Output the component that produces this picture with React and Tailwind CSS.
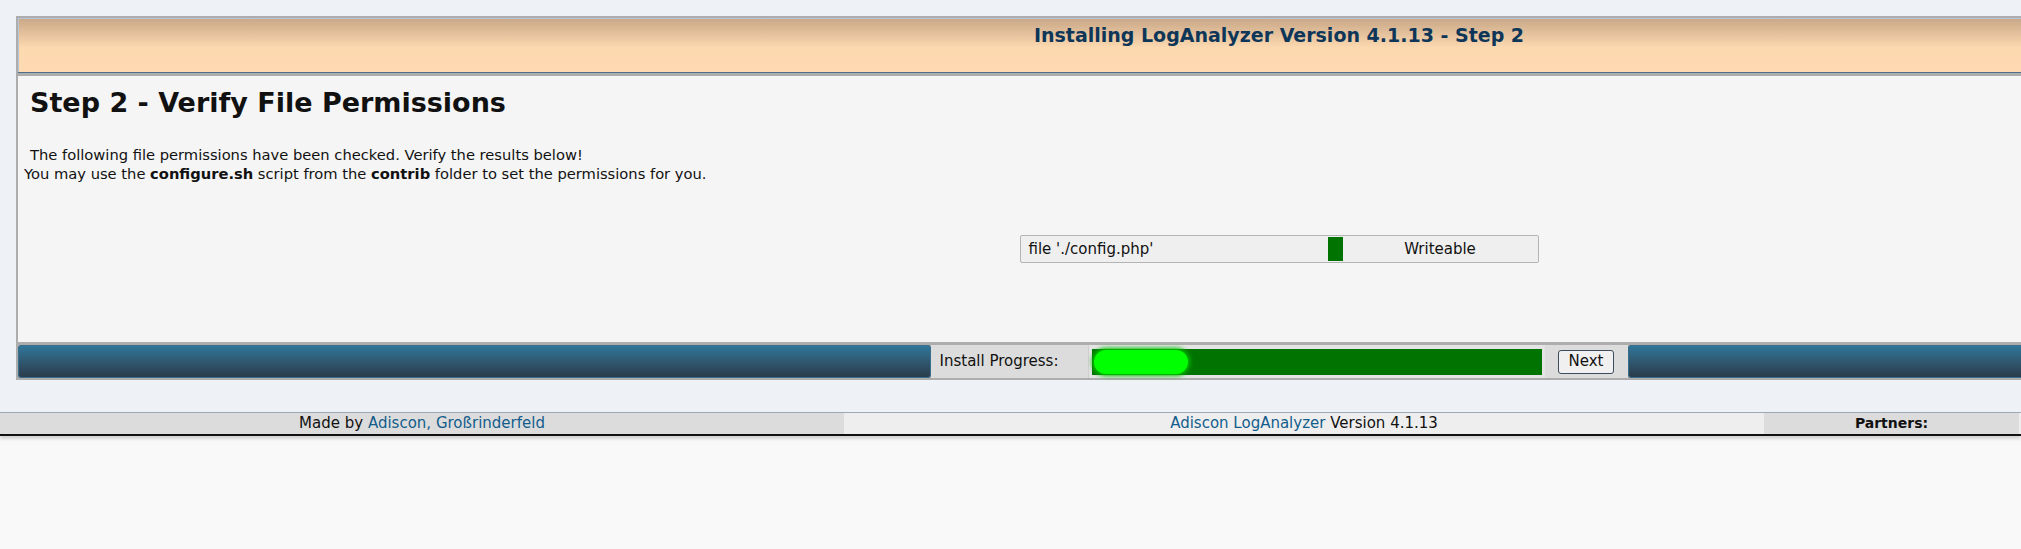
import React from 'react';

const font = "font-['DejaVu_Sans','Verdana','Liberation_Sans',sans-serif]";

function FileRow({ name, status }) {
  return (
    <div className="flex justify-center">
      <div className="flex h-[28px] w-[519px] items-stretch rounded-[2px] border border-[#b4b4b4] bg-[#efefef] text-[15px] text-[#111]">
        <div className="flex w-[307px] items-center pl-[8px]">{name}</div>
        <div className="my-[1px] w-[15px] bg-[#007300]" />
        <div className="flex flex-1 items-center justify-center">{status}</div>
      </div>
    </div>
  );
}

function ProgressBar({ percent }) {
  return (
    <div className="relative h-[26px] w-[450px] bg-[#007300]">
      <div
        className="absolute left-[2px] top-[1px] h-[24px] rounded-full bg-[#00ff00] shadow-[0_0_4px_2px_#00c000]"
        style={{ width: `${percent}%` }}
      />
    </div>
  );
}

export default function App() {
  return (
    <div className={`min-h-screen w-full overflow-hidden bg-[#f9f9f9] ${font}`}>
      <div className="bg-[#eef1f5] pb-[32px] pt-[16px]">
        <div className="ml-[16px] flex w-[2526px] flex-col gap-[4px] bg-[#adadad] p-[2px]">
          {/* header */}
          <div className="h-[55px] border-b border-[#4f6d8c] bg-gradient-to-b from-[#c8a787] via-[#fdd9b0] via-55% to-[#fed9b1] pt-[6px] text-center text-[19px] font-bold leading-[23px] text-[#0d3659] shadow-[inset_1px_1px_0_#b7c6d6]">
            Installing LogAnalyzer Version 4.1.13 - Step 2
          </div>

          <div className="-mt-[1px] flex flex-col gap-[3px]">
            {/* content */}
            <div className="h-[266px] bg-[#f5f5f5] pt-[9px] text-[#111]">
              <h1 className="pl-[12px] text-[27px] font-bold leading-[36px] text-[#111]">
                Step 2 - Verify File Permissions
              </h1>
              <div className="mt-[24px] text-[14.7px] leading-[19px]">
                <div className="pl-[12px]">The following file permissions have been checked. Verify the results below!</div>
                <div className="pl-[6px]">
                  You may use the <b>configure.sh</b> script from the <b>contrib</b> folder to set the permissions for you.
                </div>
              </div>
              <div className="mt-[52px]">
                <FileRow name="file './config.php'" status="Writeable" />
              </div>
            </div>

            {/* bottom bar */}
            <div className="flex h-[33px] items-stretch">
              <div className="flex-1 rounded-[4px] bg-gradient-to-b from-[#2f789d] to-[#2a3a48] shadow-[inset_0_0_0_1px_#3a6f8e]" />
              <div className="flex w-[157px] items-center bg-[#dcdcdc] pl-[9px] text-[15px] text-[#111]">
                Install Progress:
              </div>
              <div className="flex w-[457px] items-start border-l border-[#cfcfcf] bg-[#e4e4e4] pl-[3px] pt-[4px]">
                <ProgressBar percent={21} />
              </div>
              <div className="flex w-[83px] items-center justify-center bg-[#dcdcdc]">
                <button className="h-[24px] w-[56px] rounded-[3px] border border-[#3c4c5c] bg-[#f0f0f0] text-[15px] leading-none text-[#111]">
                  Next
                </button>
              </div>
              <div className="flex-1 rounded-[4px] bg-gradient-to-b from-[#2f789d] to-[#2a3a48] shadow-[inset_0_0_0_1px_#3a6f8e]" />
            </div>
          </div>
        </div>
      </div>

      {/* footer */}
      <div className="flex h-[24px] border-b-2 border-t border-b-[#111] border-t-[#9ea9b4] text-[15px] shadow-[0_3px_3px_rgba(0,0,0,0.15)]">
        <div className="flex w-[844px] items-center justify-center bg-[#dcdcdc] text-[#111]">
          Made by&nbsp;<span className="text-[#135d8c]">Adiscon, Großrinderfeld</span>
        </div>
        <div className="flex w-[920px] items-center justify-center bg-[#eeeeee] text-[#111]">
          <span className="text-[#135d8c]">Adiscon LogAnalyzer</span>&nbsp;Version 4.1.13
        </div>
        <div className="flex w-[255px] items-center justify-center bg-[#dcdcdc] text-[14px] font-bold text-[#111]">
          Partners:
        </div>
        <div className="flex-1 bg-[#eeeeee]" />
      </div>
    </div>
  );
}
